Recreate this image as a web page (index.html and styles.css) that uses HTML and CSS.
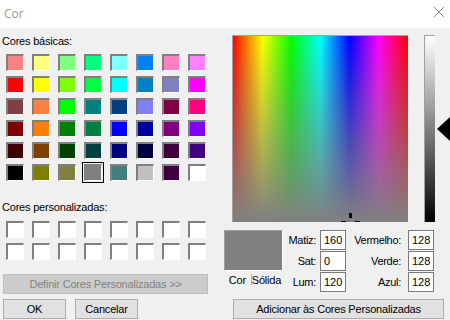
FILE: index.html
```html
<!DOCTYPE html>
<html lang="pt">
<head>
  <meta charset="UTF-8">
  <title>Cor</title>
  <link rel="stylesheet" href="styles.css">
</head>
<body>
  <div class="titlebar">
    <span class="title">Cor</span>
    <svg class="close" width="12" height="12" viewBox="0 0 12 12">
      <path d="M1 1 L11 11 M11 1 L1 11" stroke="#8a8a8a" stroke-width="1" fill="none"/>
    </svg>
  </div>

  <div class="dialog">
    <div class="left">
      <div class="label">Cores básicas:</div>
      <div class="swatches" id="basic"></div>

      <div class="label label-custom">Cores personalizadas:</div>
      <div class="swatches custom" id="custom"></div>

      <button class="btn btn-wide" disabled>Definir Cores Personalizadas &gt;&gt;</button>
      <div class="btn-row">
        <button class="btn btn-small">OK</button>
        <button class="btn btn-small">Cancelar</button>
      </div>
    </div>

    <div class="right">
      <div class="picker">
        <div class="spectrum">
          <div class="cross cross-v"></div>
          <div class="cross cross-l"></div>
          <div class="cross cross-r"></div>
        </div>
        <div class="lum"></div>
        <div class="arrow"></div>
      </div>

      <div class="values">
        <div class="preview">
          <div class="preview-box"></div>
          <div class="preview-label">Cor <span class="caret"></span>Sólida</div>
        </div>
        <div class="fields">
          <label>Matiz:</label><input value="160">
          <label class="wide">Vermelho:</label><input value="128">
          <label>Sat:</label><input value="0">
          <label class="wide">Verde:</label><input value="128">
          <label>Lum:</label><input value="120">
          <label class="wide">Azul:</label><input value="128">
        </div>
      </div>

      <button class="btn btn-add">Adicionar às Cores Personalizadas</button>
    </div>
  </div>

  <script>
    const basicColors = [
      "#ff8080", "#ffff80", "#80ff80", "#00ff80", "#80ffff", "#0080ff", "#ff80c0", "#ff80ff",
      "#ff0000", "#ffff00", "#80ff00", "#00ff40", "#00ffff", "#0080c0", "#8080c0", "#ff00ff",
      "#804040", "#ff8040", "#00ff00", "#008080", "#004080", "#8080ff", "#800040", "#ff0080",
      "#800000", "#ff8000", "#008000", "#008040", "#0000ff", "#0000a0", "#800080", "#8000ff",
      "#400000", "#804000", "#004000", "#004040", "#000080", "#000040", "#400040", "#400080",
      "#000000", "#808000", "#808040", "#808080", "#408080", "#c0c0c0", "#400040", "#ffffff"
    ];
    const selected = 43;

    const basic = document.getElementById("basic");
    basicColors.forEach((color, i) => {
      const div = document.createElement("div");
      div.classList.add("swatch");
      if (i === selected) div.classList.add("selected");
      div.style.background = color;
      basic.appendChild(div);
    });

    const custom = document.getElementById("custom");
    for (let i = 0; i < 16; i++) {
      const div = document.createElement("div");
      div.classList.add("swatch");
      custom.appendChild(div);
    }
  </script>
</body>
</html>
```

FILE: styles.css
```css
/* General */
body {
  margin: 0;
  width: 450px;
  height: 320px;
  overflow: hidden;
  background: #f0f0f0;
  font-family: 'Liberation Sans', Arial, sans-serif;
  font-size: 11px;
  color: #000;
}

/* Title bar */
.titlebar {
  height: 28px;
  background: #fff;
  display: flex;
  align-items: center;
  justify-content: space-between;
  padding: 0 5px 0 4px;
}

.title {
  font-family: 'Open Sans', 'Noto Sans', sans-serif;
  font-size: 12px;
  color: #999;
  margin-top: -2px;
}

.close {
  margin-top: -4px;
}

/* Layout */
.dialog {
  display: flex;
  padding-top: 7px;
}

.left {
  width: 222px;
  padding-left: 2px;
}

.right {
  flex: 1;
  display: flex;
  flex-direction: column;
}

.label {
  height: 13px;
  line-height: 13px;
  letter-spacing: -0.2px;
}

.label-custom {
  margin-top: 20px;
}

/* Swatches */
.swatches {
  display: grid;
  grid-template-columns: repeat(8, 18px);
  grid-auto-rows: 17px;
  column-gap: 8px;
  row-gap: 5px;
  margin: 6px 0 0 4px;
}

.swatches.custom {
  margin-top: 7px;
}

.swatch {
  box-sizing: border-box;
  border-style: solid;
  border-width: 2px 1px 1px 2px;
  border-color: #808080 #fff #fff #808080;
  background: #fff;
}

.swatch.selected {
  outline: 1px solid #000;
  outline-offset: 1px;
}

/* Buttons */
.btn {
  box-sizing: border-box;
  height: 20px;
  padding: 0;
  font-family: 'Liberation Sans', Arial, sans-serif;
  font-size: 11px;
  letter-spacing: -0.2px;
  color: #000;
  background: #e1e1e1;
  border: 1px solid #adadad;
}

.btn-wide {
  display: block;
  width: 205px;
  margin: 14px 0 0 1px;
  background: #cccccc;
  border-color: #bfbfbf;
  color: #838383;
}

.btn-row {
  display: flex;
  gap: 9px;
  margin: 5px 0 0 1px;
}

.btn-small {
  width: 63px;
}

.btn-add {
  width: 211px;
  margin: 7px 0 0 9px;
}

/* Colour picker */
.picker {
  display: flex;
  height: 187px;
}

.spectrum {
  position: relative;
  overflow: hidden;
  width: 176px;
  margin-left: 8px;
  box-sizing: border-box;
  border-top: 1px solid #a0a0a0;
  border-left: 1px solid #a0a0a0;
  background:
    linear-gradient(to bottom, rgba(128, 128, 128, 0), #808080),
    linear-gradient(to right, #f00, #ff0 16.7%, #0f0 33.3%, #0ff 50%, #00f 66.7%, #f0f 83.3%, #f00);
}

.cross {
  position: absolute;
  background: #000;
}

.cross-v {
  left: 116px;
  top: 177px;
  width: 3px;
  height: 5px;
}

.cross-l {
  left: 108px;
  top: 185px;
  width: 5px;
  height: 3px;
}

.cross-r {
  left: 122px;
  top: 185px;
  width: 5px;
  height: 3px;
}

.lum {
  width: 11px;
  margin-left: 16px;
  box-sizing: border-box;
  border-top: 1px solid #a0a0a0;
  border-left: 1px solid #a0a0a0;
  background: linear-gradient(to bottom, #fff, #808080 50%, #000);
}

.arrow {
  width: 0;
  height: 0;
  margin: 82px 0 0 2px;
  border-top: 12.5px solid transparent;
  border-bottom: 12.5px solid transparent;
  border-right: 13px solid #000;
}

/* Values */
.values {
  display: flex;
  margin-top: 8px;
}

.preview {
  width: 59px;
}

.preview-box {
  box-sizing: border-box;
  height: 41px;
  background: #808080;
  border-style: solid;
  border-width: 1px;
  border-color: #a0a0a0 #fff #fff #a0a0a0;
}

.preview-label {
  margin-top: 3px;
  line-height: 13px;
  text-align: center;
  letter-spacing: -0.2px;
  padding-left: 3px;
}

.caret {
  display: inline-block;
  width: 1px;
  height: 11px;
  vertical-align: -1px;
  background: #e8a060;
  margin-left: 2px;
}

.fields {
  display: grid;
  grid-template-columns: 30px 26px 54px 26px;
  grid-auto-rows: 20px;
  column-gap: 4px;
  row-gap: 1px;
  margin-left: 3px;
}

.fields label {
  display: flex;
  align-items: center;
  justify-content: flex-end;
  letter-spacing: -0.3px;
}

.fields label.wide {
  padding-right: 3px;
}

.fields input {
  box-sizing: border-box;
  width: 26px;
  height: 20px;
  margin: 0;
  padding: 0 0 0 3px;
  border: 1px solid #7a7a7a;
  background: #fff;
  font-family: 'Liberation Sans', Arial, sans-serif;
  font-size: 11px;
  color: #000;
}
```
